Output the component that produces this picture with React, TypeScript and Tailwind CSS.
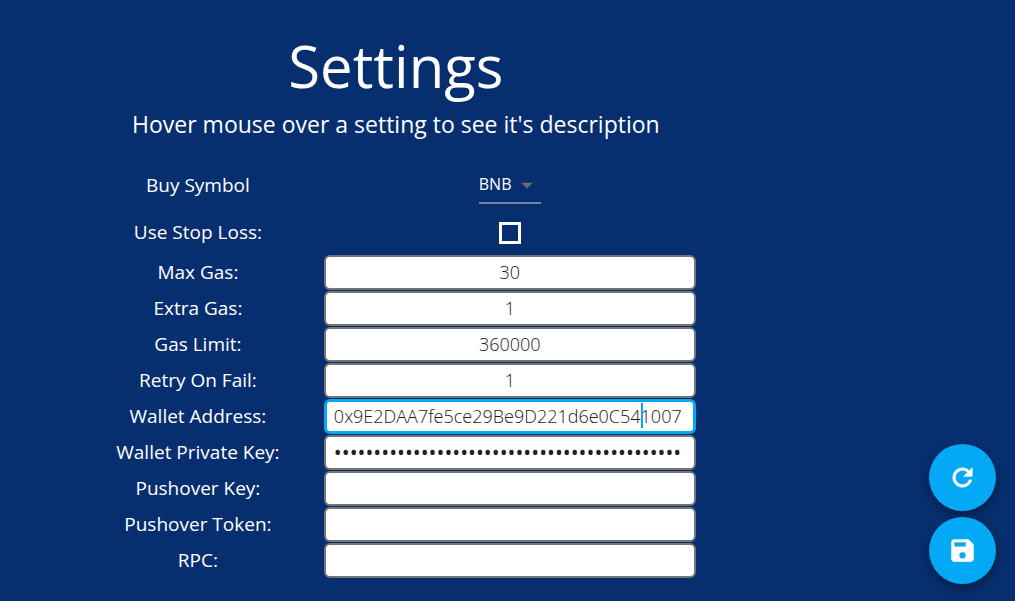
import React from "react";
import { MdArrowDropDown } from "react-icons/md";

type Field = {
  id: string;
  label: string;
  value: string;
  type?: "text" | "password";
  long?: boolean;
  active?: boolean;
};

const fields: Field[] = [
  { id: "max-gas", label: "Max Gas:", value: "30" },
  { id: "extra-gas", label: "Extra Gas:", value: "1" },
  { id: "gas-limit", label: "Gas Limit:", value: "360000" },
  { id: "retry", label: "Retry On Fail:", value: "1" },
  {
    id: "wallet-address",
    label: "Wallet Address:",
    value: "0x9E2DAA7fe5ce29Be9D221d6e0C541007",
    long: true,
    active: true,
  },
  {
    id: "private-key",
    label: "Wallet Private Key:",
    value: "0".repeat(44),
    type: "password",
    long: true,
  },
  { id: "pushover-key", label: "Pushover Key:", value: "" },
  { id: "pushover-token", label: "Pushover Token:", value: "" },
  { id: "rpc", label: "RPC:", value: "" },
];

function FieldRow({ field }: { field: Field }) {
  return (
    <>
      <label htmlFor={field.id} className="text-center text-[19px] leading-9">
        {field.label}
      </label>
      <div className="relative flex h-9 items-center">
        <input
          id={field.id}
          type={field.type ?? "text"}
          defaultValue={field.value}
          className={
            "h-[35px] w-full rounded-md bg-white text-[#212121] outline-none " +
            (field.active ? "border-[3px] border-[#03a9f4] px-[7px] " : "border-2 border-[#757575] px-2 ") +
            (field.type === "password" ? "text-[21px] font-normal " : "text-[18px] font-light ") +
            (field.long ? "text-left" : "text-center")
          }
        />
        {field.active && (
          <span className="absolute top-[5px] left-[317px] h-[25px] w-[2px] bg-[#03a9f4]" />
        )}
      </div>
    </>
  );
}

function ActionButton({ label, path }: { label: string; path: string }) {
  return (
    <button
      type="button"
      aria-label={label}
      className="flex size-[67px] items-center justify-center rounded-full bg-[#03a9f4] shadow-[0_4px_10px_rgba(0,0,0,0.35)]"
    >
      <svg
        viewBox="0 0 24 24"
        className="size-[29px] fill-white stroke-white"
        strokeWidth="0.6"
        strokeLinejoin="round"
        aria-hidden="true"
      >
        <path d={path} />
      </svg>
    </button>
  );
}

export default function App() {
  return (
    <div className="min-h-screen bg-[#072e6e] pb-5 font-['Open_Sans','Noto_Sans',sans-serif] text-white">
      <main className="w-[78%] pt-[30px]">
        <h1 className="text-center text-[58px] leading-[72px]">Settings</h1>
        <p className="text-center text-[23px] leading-[44px]">
          Hover mouse over a setting to see it's description
        </p>
        <form className="mt-[13px] mr-[96px] ml-[72px] grid grid-cols-[252fr_372fr] items-center">
          <label htmlFor="buy-symbol" className="text-center text-[19px] leading-[52px]">
            Buy Symbol
          </label>
          <div className="flex justify-center">
            <div className="relative flex items-center">
              <select
                id="buy-symbol"
                defaultValue="BNB"
                className="h-[38px] w-[62px] appearance-none border-b-2 border-[#7482a3] bg-transparent text-base text-white outline-none"
              >
                <option>BNB</option>
              </select>
              <MdArrowDropDown className="pointer-events-none absolute right-0 size-7 text-[#6b6b6b]" />
            </div>
          </div>
          <label htmlFor="stop-loss" className="text-center text-[19px] leading-[43px]">
            Use Stop Loss:
          </label>
          <div className="flex justify-center">
            <input
              id="stop-loss"
              type="checkbox"
              className="size-[22px] appearance-none border-[3px] border-white"
            />
          </div>
          {fields.map((field) => (
            <FieldRow key={field.id} field={field} />
          ))}
        </form>
      </main>
      <div className="fixed right-[19px] bottom-[17px] flex flex-col gap-[6px]">
        <ActionButton
          label="Refresh"
          path="M17.65 6.35A7.96 7.96 0 0 0 12 4a8 8 0 1 0 7.73 10h-2.08A6 6 0 1 1 12 6c1.66 0 3.14.69 4.22 1.78L13 11h7V4z"
        />
        <ActionButton
          label="Save"
          path="M17 3H5a2 2 0 0 0-2 2v14a2 2 0 0 0 2 2h14a2 2 0 0 0 2-2V7zM12 19a3 3 0 1 1 0-6 3 3 0 0 1 0 6zM15 9H5V5h10z"
        />
      </div>
    </div>
  );
}
